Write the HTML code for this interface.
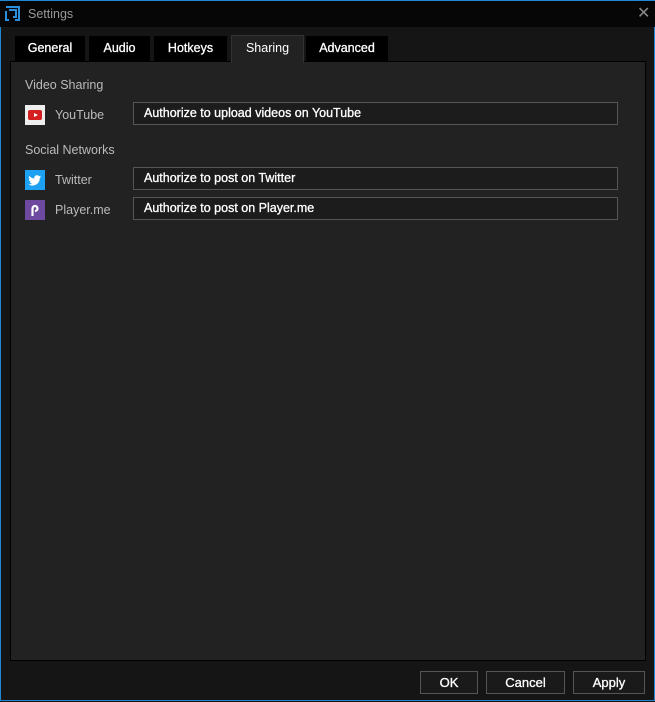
<!DOCTYPE html><html><head><style>
body{margin:0;width:655px;height:702px;background:#151515;font-family:"Liberation Sans",sans-serif;position:relative;overflow:hidden}
.win{position:absolute;left:0;top:0;width:653px;height:700px;border:1px solid #1e88d4;border-top:none;}
.title{position:absolute;left:0;top:0;width:655px;height:26px;background:#060606;border-top:1px solid #1e88d4}
.t{position:absolute;color:#aaa;font-size:12px}
.tab{position:absolute;top:36px;height:25px;background:#000;color:#fff;font-size:12.5px;text-align:center;line-height:25px;-webkit-text-stroke:0.3px #fff}
.panel{position:absolute;left:10px;top:61px;width:634px;height:598px;background:#222;border:1px solid #000}
.lbl{position:absolute;color:#bbb;font-size:12.5px}
.box{position:absolute;left:133px;height:21px;border:1px solid #555;background:#1c1c1c;color:#fff;font-size:12.5px;line-height:21px;padding-left:10px;width:473px;-webkit-text-stroke:0.3px #fff}
.ic{position:absolute;left:25px;width:20px;height:20px}
.btn{position:absolute;top:671px;height:21px;border:1px solid #555;background:#1a1a1a;color:#fff;font-size:13px;text-align:center;line-height:21px;box-sizing:border-box;height:23px;-webkit-text-stroke:0.3px #fff}
</style></head><body>
<div class="win"></div>
<div class="title">
<svg style="position:absolute;left:5px;top:5px" width="15" height="15" viewBox="0 0 15 15"><path d="M1 1h13v13h-4M4 4h7v7H8M1 5v9h3" fill="none" stroke="#2a8fdc" stroke-width="2"/></svg>
<div class="t" style="left:28px;top:6px;font-size:12.5px;color:#999">Settings</div>
<div class="t" style="left:637px;top:2px;font-size:16px;color:#888">✕</div>
</div>
<div class="tab" style="left:15px;width:70px">General</div>
<div class="tab" style="left:89px;width:61px">Audio</div>
<div class="tab" style="left:154px;width:73px">Hotkeys</div>
<div class="tab" style="left:306px;width:82px">Advanced</div>
<div class="panel"></div>
<div class="tab" style="left:231px;width:71px;height:27px;background:#222;border:1px solid #333;border-bottom:none;top:35px;-webkit-text-stroke:0">Sharing</div>
<div class="lbl" style="left:25px;top:78px">Video Sharing</div>
<div class="ic" style="top:105px;background:#eee"><div style="position:absolute;left:3px;top:5px;width:14px;height:10px;background:#d42020;border-radius:2px"></div><div style="position:absolute;left:9px;top:8px;border-left:4px solid #fff;border-top:2px solid transparent;border-bottom:2px solid transparent"></div></div>
<div class="lbl" style="left:55px;top:108px">YouTube</div>
<div class="box" style="top:102px">Authorize to upload videos on YouTube</div>
<div class="lbl" style="left:25px;top:143px">Social Networks</div>
<div class="ic" style="top:170px;background:#1da1f2"><svg width="20" height="20" viewBox="0 0 20 20"><path d="M16 6.5c-.5.2-1 .3-1.5.4.5-.3 1-.8 1.1-1.4-.5.3-1.1.5-1.7.6a2.6 2.6 0 0 0-4.5 2.4C7.300 8.400 5.400 7.400 4.200 5.900c-.7 1.200-.3 2.700.8 3.400-.4 0-.8-.1-1.200-.3 0 1.300.9 2.400 2.100 2.600-.4.1-.8.100-1.200.100.3 1.100 1.300 1.800 2.400 1.800A5.300 5.300 0 0 1 3.500 14.500c1.200.7 2.500 1.100 3.900 1.100 4.800 0 7.500-4 7.400-7.600.5-.4.900-.8 1.200-1.300z" fill="#fff"/></svg></div>
<div class="lbl" style="left:55px;top:173px">Twitter</div>
<div class="box" style="top:167px">Authorize to post on Twitter</div>
<div class="ic" style="top:200px;background:#6d4aa0"><svg width="20" height="20"><path d="M7.5 16V8.5a2.5 2.5 0 1 1 2.5 2.5" fill="none" stroke="#fff" stroke-width="2.2"/></svg></div>
<div class="lbl" style="left:55px;top:203px">Player.me</div>
<div class="box" style="top:197px">Authorize to post on Player.me</div>
<div class="btn" style="left:420px;width:58px">OK</div>
<div class="btn" style="left:486px;width:79px">Cancel</div>
<div class="btn" style="left:573px;width:72px">Apply</div>
</body></html>
